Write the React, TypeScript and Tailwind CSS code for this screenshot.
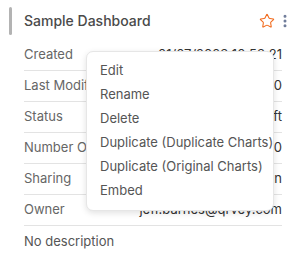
import React from 'react';
import { Star, EllipsisVertical } from 'lucide-react';

const rows = [
  { label: 'Created', value: '01/07/2023 10:53:21' },
  { label: 'Last Modified', value: '01/07/2023 10:53:20' },
  { label: 'Status', value: 'Draft' },
  { label: 'Number Of Charts', value: '0' },
  { label: 'Sharing', value: 'Shared with Admin' },
  { label: 'Owner', value: 'jeff.barnes@qrvey.com' },
];

const menuItems = [
  'Edit',
  'Rename',
  'Delete',
  'Duplicate (Duplicate Charts)',
  'Duplicate (Original Charts)',
  'Embed',
];

export default function App() {
  return (
    <div className="relative w-[302px] h-[262px] overflow-hidden bg-white font-['Inter',sans-serif]">
      {/* header */}
      <div className="flex items-center h-[40px] pl-[9px] pr-[9px] pt-[1px]">
        <div className="w-[3px] h-[28px] rounded-full bg-[#b3b3b3]" />
        <div className="ml-[12px] flex-1 text-[14px] font-medium text-[#4a4a4a] leading-none">Sample Dashboard</div>
        <Star size={16} strokeWidth={1.6} className="text-[#f26b1d]" />
        <EllipsisVertical size={16} strokeWidth={2.5} className="ml-[2px] text-[#6e7b99]" />
      </div>

      {/* details */}
      <div className="pl-[24px] pr-[20px]">
        {rows.map(r => (
          <div key={r.label} className="flex items-center justify-between h-[31px] border-b border-[#e3e3e3] text-[13px]">
            <span className="text-[#666666] whitespace-nowrap">{r.label}</span>
            <span className="text-[#333333] whitespace-nowrap">{r.value}</span>
          </div>
        ))}
        <div className="flex items-center h-[31px] text-[13px] text-[#555555]">No description</div>
      </div>

      {/* context menu */}
      <div className="absolute left-[86px] top-[51px] w-[188px] py-[7px] bg-white border border-[#e6e6e6] rounded-[7px] shadow-[0_2px_6px_rgba(0,0,0,0.12)]">
        {menuItems.map(item => (
          <div key={item} className="h-[24px] flex items-center pl-[13px] text-[13px] text-[#555555] whitespace-nowrap">
            {item}
          </div>
        ))}
      </div>
    </div>
  );
}
